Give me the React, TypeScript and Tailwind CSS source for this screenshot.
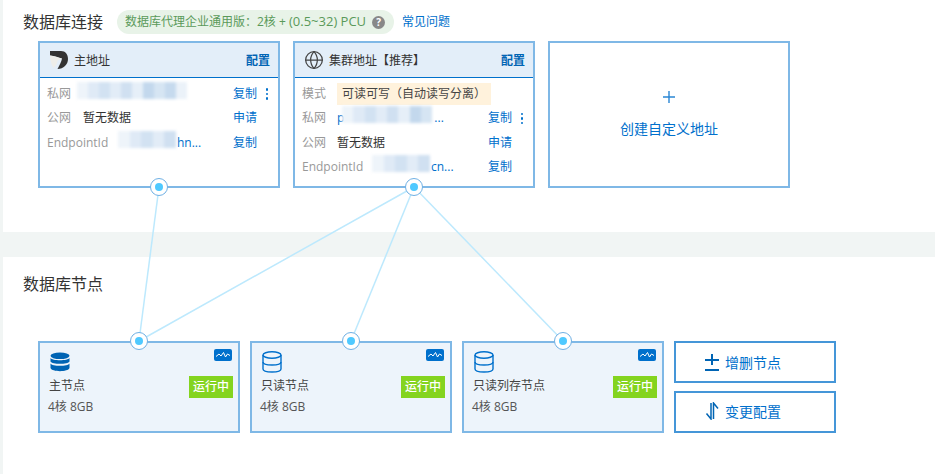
import React from "react";
import { Globe } from "lucide-react";

const FONT = { fontFamily: '"Open Sans", "Noto Sans CJK SC", "Liberation Sans", sans-serif' };

const MOSAIC = ["#eef4fa", "#dfeaf6", "#d2e2f2", "#e2ecf7", "#d0e0f1", "#e6eff8", "#c3d8ed", "#d6e5f3", "#c6daee", "#ebf2f9"];

function Blur({ w, className = "" }: { w: number; className?: string }) {
  const n = Math.round(w / 11);
  return (
    <span className={`absolute top-[-3px] left-0 h-[17px] flex blur-[1.5px] ${className}`} style={{ width: w }}>
      {Array.from({ length: n }, (_, i) => (
        <i key={i} className="block flex-1" style={{ background: MOSAIC[i % MOSAIC.length] }} />
      ))}
    </span>
  );
}

function Row({ label, children, action, more, labelW }: { label: string; children?: React.ReactNode; action?: string; more?: boolean; labelW: string }) {
  return (
    <div className="flex items-center h-[24.3px] text-[12px]">
      <span className={`text-[#999] shrink-0 ${labelW}`}>{label}</span>
      <div className="relative flex-1 min-w-0 whitespace-nowrap text-[#333]">{children}</div>
      {action && <span className="text-[#0070cc] w-[24px] shrink-0">{action}</span>}
      <span className="w-[13px] shrink-0 flex justify-end pr-[2px]">
        {more && (
          <span className="flex flex-col gap-[2px]">
            <i className="block w-[2.5px] h-[2.5px] rounded-full bg-[#0070cc]" />
            <i className="block w-[2.5px] h-[2.5px] rounded-full bg-[#0070cc]" />
            <i className="block w-[2.5px] h-[2.5px] rounded-full bg-[#0070cc]" />
          </span>
        )}
      </span>
    </div>
  );
}

function Logo() {
  return (
    <svg width="20" height="20" viewBox="0 0 20 20" className="shrink-0">
      <path d="M1 1 H12 C16.5 1 19 4.5 19 9 C19 14.5 14.5 19 8.5 19 C10.5 15 12.5 12 13 8.5 C9.5 8 5 5.5 1 5.5 Z" fill="#333" />
      <path d="M1 5.5 C5 5.5 9.5 8 13 8.5 C11 9.5 9 10 8.5 11 C8 14 6 17 4.5 18 C2.5 15 1 10 1 5.5 Z" fill="#eeeeea" />
    </svg>
  );
}

function AddressCard({ icon, title, children, dot }: { icon: React.ReactNode; title: string; children: React.ReactNode; dot?: boolean }) {
  return (
    <div className="relative w-[242px] h-[147px] border-2 border-[#7fb8e6] bg-white">
      <div className="flex items-center h-[35px] bg-[#e3eef9] border-b border-[#0070cc] pl-[9px] pr-[8px]">
        {icon}
        <span className="ml-[5px] pt-[1px] text-[12px] text-[#333] flex-1">{title}</span>
        <span className="pt-[1px] text-[12px] font-semibold text-[#0064b4]">配置</span>
      </div>
      {children}
      {dot && <Dot className="left-[110px] bottom-[-10px]" />}
    </div>
  );
}

function Dot({ className }: { className: string }) {
  return (
    <span className={`absolute z-20 w-[18px] h-[18px] rounded-full bg-white border border-[#6fb0e4] flex items-center justify-center ${className}`}>
      <i className="block w-[8px] h-[8px] rounded-full bg-[#4fc9ff]" />
    </span>
  );
}

function FilledDb() {
  return (
    <svg width="20" height="20" viewBox="0 0 20 20">
      <ellipse cx="10" cy="3.8" rx="9.5" ry="3.3" fill="#0064b4" />
      <path d="M.5 6 C2 9 18 9 19.5 6 V9.4 C18 12.6 2 12.6 .5 9.4 Z" fill="#0064b4" />
      <path d="M.5 11.4 C2 14.6 18 14.6 19.5 11.4 V16 C18 20.2 2 20.2 .5 16 Z" fill="#0064b4" />
    </svg>
  );
}

function OutlineDb() {
  return (
    <svg width="20" height="22" viewBox="0 0 20 22">
      <g fill="none" stroke="#0070cc" strokeWidth="1.4">
        <ellipse cx="10" cy="4" rx="9" ry="3.2" />
        <path d="M1 4 V18 C1 22 19 22 19 18 V4" />
        <path d="M1 11 C1 15 19 15 19 11" />
      </g>
    </svg>
  );
}

function NodeCard({ name, w, icon }: { name: string; w: string; icon: React.ReactNode }) {
  return (
    <div className={`relative h-[92px] ${w} border-2 border-[#7fb8e6] bg-[#edf4fb] flex justify-between`}>
      <div className="pl-[8px] pt-[9px] text-[#555]">
        <div className="h-[20px] pl-[2px] flex items-center">{icon}</div>
        <div className="mt-[4px] text-[12px] leading-[20px] text-[#444] pl-[1px]">{name}</div>
        <div className="mt-[1px] text-[12px] leading-[20px] text-[#555]">4核 8GB</div>
      </div>
      <div className="flex flex-col items-end pt-[6px] pr-[5px]">
        <svg width="18" height="12" viewBox="0 0 18 12" className="mr-[1px]">
          <rect width="18" height="12" rx="2" fill="#0070cc" />
          <path d="M2 7.5 L5 5 L7 7 L9.5 3.5 L11.5 8 L13.5 5 L16 6.5" fill="none" stroke="#fff" strokeWidth="1" />
        </svg>
        <span className="mt-[15px] w-[44px] h-[22px] bg-[#84d41f] text-white text-[12px] font-medium flex items-center justify-center">运行中</span>
      </div>
      <Dot className="top-[-11px] left-[90px]" />
    </div>
  );
}

export default function App() {
  return (
    <div className="relative w-[935px] h-[474px] bg-white overflow-hidden pl-[3px]" style={FONT}>
      <div className="absolute left-0 top-0 w-[3px] h-full bg-[#f1f5f4]" />

      <section className="h-[232px]">
        <div className="flex items-center pt-[10px] h-[34px] pl-[20px]">
          <h2 className="text-[16px] text-[#333] w-[94px] font-normal -mt-[1px]">数据库连接</h2>
          <div className="h-[24px] w-[277px] rounded-full bg-[#e8f3e8] flex items-center pl-[8px] text-[12px] text-[#5a9a5a] whitespace-nowrap">
            <span>数据库代理企业通用版：2核 + <span className="text-[13px]">(0.5~32) PCU</span></span>
            <span className="ml-[6px] w-[13px] h-[13px] rounded-full bg-[#888] text-white text-[10px] font-bold flex items-center justify-center">?</span>
          </div>
          <span className="ml-[8px] text-[12px] text-[#0070cc]">常见问题</span>
        </div>

        <div className="flex gap-[13px] pl-[35px] mt-[7px]">
          <AddressCard icon={<Logo />} title="主地址" dot>
            <div className="pl-[7px] pr-[8px] pt-[4px]">
              <Row label="私网" labelW="w-[30px]" action="复制" more>
                <Blur w={110} />
                <span className="invisible">x</span>
              </Row>
              <Row label="公网" labelW="w-[36px]" action="申请">暂无数据</Row>
              <Row label="EndpointId" labelW="w-[71px]" action="复制">
                <Blur w={58} />
                <span className="pl-[59px] text-[#0070cc]">hn...</span>
              </Row>
            </div>
          </AddressCard>

          <AddressCard icon={<Globe size={20} strokeWidth={1.5} color="#444" />} title="集群地址【推荐】" dot>
            <div className="pl-[7px] pr-[8px] pt-[4px]">
              <Row label="模式" labelW="w-[35px]">
                <span className="inline-block h-[22px] leading-[22px] bg-[#fff2dc] px-[5px] text-[#444]">可读可写（自动读写分离）</span>
              </Row>
              <Row label="私网" labelW="w-[35px]" action="复制" more>
                <span className="text-[#0070cc]">p</span>
                <Blur w={90} className="left-[5px]" />
                <span className="pl-[90px] text-[#0070cc]">...</span>
              </Row>
              <Row label="公网" labelW="w-[35px]" action="申请">暂无数据</Row>
              <Row label="EndpointId" labelW="w-[70px]" action="复制">
                <Blur w={58} />
                <span className="pl-[59px] text-[#0070cc]">cn...</span>
              </Row>
            </div>
          </AddressCard>

          <div className="w-[242px] h-[147px] border-2 border-[#7fb8e6] flex flex-col items-center justify-center text-[#0070cc]">
            <svg width="12" height="12" viewBox="0 0 12 12" className="shrink-0">
              <path d="M6 0 V12 M0 6 H12" stroke="#2a86d4" strokeWidth="1.4" fill="none" />
            </svg>
            <span className="mt-[16px] text-[14px] leading-[20px]">创建自定义地址</span>
          </div>
        </div>
      </section>

      <div className="h-[25px] bg-[#f1f5f4] -ml-[3px]" />

      <section>
        <h2 className="pl-[20px] mt-[17px] h-[20px] leading-[20px] text-[16px] text-[#333] font-normal">数据库节点</h2>
        <div className="flex gap-[10px] pl-[35px] mt-[47px]">
          <NodeCard name="主节点" w="w-[202px]" icon={<FilledDb />} />
          <NodeCard name="只读节点" w="w-[202px]" icon={<OutlineDb />} />
          <NodeCard name="只读列存节点" w="w-[202px]" icon={<OutlineDb />} />
          <div className="flex flex-col gap-[8px]">
            <button className="w-[162px] h-[42px] border-2 border-[#4596d8] flex items-center pl-[29px] text-[14px] text-[#0070cc]">
              <svg width="14" height="17" viewBox="0 0 14 17" className="mr-[6px]">
                <path d="M7 0 V11 M0 6 H14 M0 16 H14" stroke="#0064b4" strokeWidth="2" fill="none" />
              </svg>
              增删节点
            </button>
            <button className="w-[162px] h-[42px] border-2 border-[#4596d8] flex items-center pl-[29px] pb-[2px] text-[14px] text-[#0070cc]">
              <svg width="14" height="18" viewBox="0 0 14 18" className="mr-[6px]">
                <path d="M6 1 V17 L1.5 11.5 M8.5 17 V1 L13 6.5" stroke="#0064b4" strokeWidth="1.5" fill="none" />
              </svg>
              变更配置
            </button>
          </div>
        </div>
      </section>

      <svg className="absolute inset-0 z-10 pointer-events-none" width="935" height="474">
        <g stroke="#bde9fd" strokeWidth="1.5" fill="none">
          <path d="M159 187 L139 341" />
          <path d="M414 187 L139 341" />
          <path d="M414 187 L351 341" />
          <path d="M414 187 L563 341" />
        </g>
      </svg>
    </div>
  );
}
